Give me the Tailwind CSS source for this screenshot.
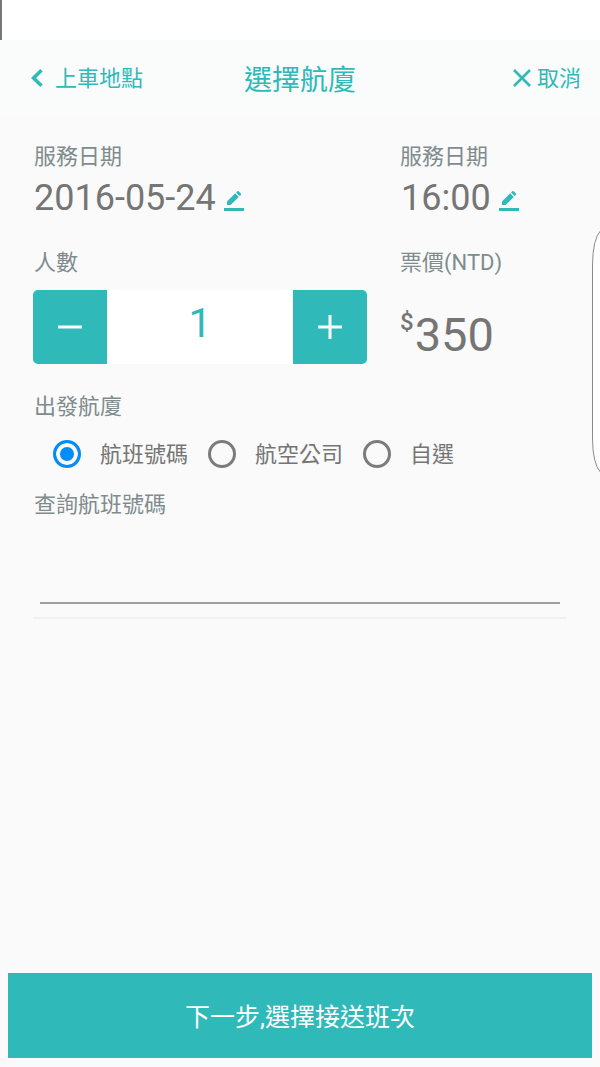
<!DOCTYPE html>
<html lang="zh-Hant">
<head>
    <meta charset="UTF-8">
    <meta name="viewport" content="width=device-width, initial-scale=1.0">
    <title>選擇航廈</title>
    <script src="https://cdn.jsdelivr.net/npm/@tailwindcss/browser@4"></script>
    <style>
        body, button, input {
            font-family: Roboto, 'Noto Sans CJK TC', sans-serif;
        }
    </style>
</head>
<body class="relative min-h-screen flex flex-col bg-[#fafafa] text-[#757575] text-[22px] leading-[26px]">

    <!-- Status Bar -->
    <div class="h-10 bg-white border-l-2 border-[#777777]"></div>

    <!-- Header -->
    <header class="grid grid-cols-[1fr_auto_1fr] items-center h-[76px] px-[19px] bg-[#fafcfb] text-[#2fb9b9]">
        <button type="button" class="flex items-center gap-3 justify-self-start pl-3">
            <svg class="w-3 h-[18px]" viewBox="0 0 12 18" fill="none" stroke="currentColor" stroke-width="3.600"><path d="M10.500 1.300 2.500 9l8 7.700"/></svg>
            <span class="pt-0.5">上車地點</span>
        </button>
        <h1 class="pt-1.5 text-[28px] leading-9">選擇航廈</h1>
        <button type="button" class="flex items-center gap-1.5 justify-self-end">
            <svg class="w-[18px] h-[18px]" viewBox="0 0 18 18" fill="none" stroke="currentColor" stroke-width="2.600"><path d="m1 1 16 16M17 1 1 17"/></svg>
            <span class="pt-0.5">取消</span>
        </button>
    </header>

    <main class="px-[33px] pt-7">

        <!-- Date and time -->
        <div class="grid grid-cols-[2fr_1fr] gap-x-[33px]">
            <section class="min-w-0">
                <h2 class="pl-px text-[#7f8c8d]">服務日期</h2>
                <div class="mt-1.5 flex items-center gap-2">
                    <span class="pl-px text-[36px] leading-[44px]">2016-05-24</span>
                    <button type="button" aria-label="編輯日期" class="mt-1.5 text-[#2fb9b9]">
                        <svg class="w-5 h-5" viewBox="0 0 20 20" fill="currentColor"><path d="M0 17h20v3H0zM3 10.500 11.200 2.300l3.600 3.600L6.600 14H3zM12.100 1.400 13.300.3q.7-.6 1.400 0l2.200 2.200q.6.700 0 1.400l-1.200 1.100z"/></svg>
                    </button>
                </div>
            </section>
            <section class="min-w-0">
                <h2 class="text-[#7f8c8d]">服務日期</h2>
                <div class="mt-1.5 flex items-center gap-2">
                    <span class="pl-px text-[36px] leading-[44px]">16:00</span>
                    <button type="button" aria-label="編輯時間" class="mt-1.5 text-[#2fb9b9]">
                        <svg class="w-5 h-5" viewBox="0 0 20 20" fill="currentColor"><path d="M0 17h20v3H0zM3 10.500 11.200 2.300l3.600 3.600L6.600 14H3zM12.100 1.400 13.300.3q.7-.6 1.400 0l2.200 2.200q.6.700 0 1.400l-1.200 1.100z"/></svg>
                    </button>
                </div>
            </section>
        </div>

        <!-- Passengers and fare -->
        <div class="mt-[30px] grid grid-cols-[2fr_1fr] gap-x-[33px]">
            <section class="min-w-0">
                <label for="passengers" class="block pl-px text-[#7f8c8d]">人數</label>
                <div class="mt-3.5 flex h-[74px] rounded-[5px] overflow-hidden bg-white text-[#2fb9b9]">
                    <button type="button" aria-label="減少" class="w-[74px] shrink-0 flex items-center justify-center bg-[#2fb9b9] text-white">
                        <svg class="w-6 h-6" viewBox="0 0 24 24" stroke="currentColor" stroke-width="3"><path d="M0 12h24"/></svg>
                    </button>
                    <input id="passengers" type="text" inputmode="numeric" value="1" class="w-full min-w-0 flex-1 pb-2 text-center text-[41px] outline-none">
                    <button type="button" aria-label="增加" class="w-[74px] shrink-0 flex items-center justify-center bg-[#2fb9b9] text-white">
                        <svg class="w-6 h-6" viewBox="0 0 24 24" stroke="currentColor" stroke-width="3"><path d="M0 12h24M12 0v24"/></svg>
                    </button>
                </div>
            </section>
            <section class="min-w-0">
                <h2 class="text-[#7f8c8d]">票價(NTD)</h2>
                <p class="mt-[30px] flex items-start gap-px">
                    <span class="text-[24px] leading-8 font-medium">$</span>
                    <span class="text-[47px] leading-[58px]">350</span>
                </p>
            </section>
        </div>

        <!-- Terminal lookup -->
        <fieldset class="mt-[30px]">
            <legend class="pl-px text-[#7f8c8d]">出發航廈</legend>
            <div class="mt-5 ml-5 flex gap-5">
                <label class="flex items-center gap-[19px]">
                    <input type="radio" name="lookup" checked class="appearance-none w-7 h-7 rounded-full border-3 border-[#7c7c7c] checked:border-[#058cf5] checked:bg-[#058cf5] checked:shadow-[inset_0_0_0_4px_#fafafa]">
                    <span class="pt-0.5">航班號碼</span>
                </label>
                <label class="flex items-center gap-[19px]">
                    <input type="radio" name="lookup" class="appearance-none w-7 h-7 rounded-full border-3 border-[#7c7c7c] checked:border-[#058cf5] checked:bg-[#058cf5] checked:shadow-[inset_0_0_0_4px_#fafafa]">
                    <span class="pt-0.5">航空公司</span>
                </label>
                <label class="flex items-center gap-[19px]">
                    <input type="radio" name="lookup" class="appearance-none w-7 h-7 rounded-full border-3 border-[#7c7c7c] checked:border-[#058cf5] checked:bg-[#058cf5] checked:shadow-[inset_0_0_0_4px_#fafafa]">
                    <span class="pt-0.5">自選</span>
                </label>
            </div>
        </fieldset>

        <div class="mt-6 border-b-2 border-[#f0f0f0] pb-[13px]">
            <label for="flight" class="block pl-px text-[#7f8c8d]">查詢航班號碼</label>
            <div class="mt-[34px] px-[7px]">
                <input id="flight" type="text" class="block w-full h-[52px] border-b-2 border-[#a0a0a0] outline-none">
            </div>
        </div>
    </main>

    <!-- Next step -->
    <footer class="mt-auto px-2 pb-[9px]">
        <button type="button" class="w-full h-[85px] pt-1 bg-[#2fb9b9] text-white text-[25px]">下一步,選擇接送班次</button>
    </footer>

    <!-- Edge panel handle -->
    <svg class="absolute right-0 top-[230px] w-2 h-[243px]" viewBox="0 0 8 243" fill="white" stroke="#8a8a8a"><path d="M9 0Q.5 9 .5 36v172Q.5 234 9 243"/></svg>

</body>
</html>
